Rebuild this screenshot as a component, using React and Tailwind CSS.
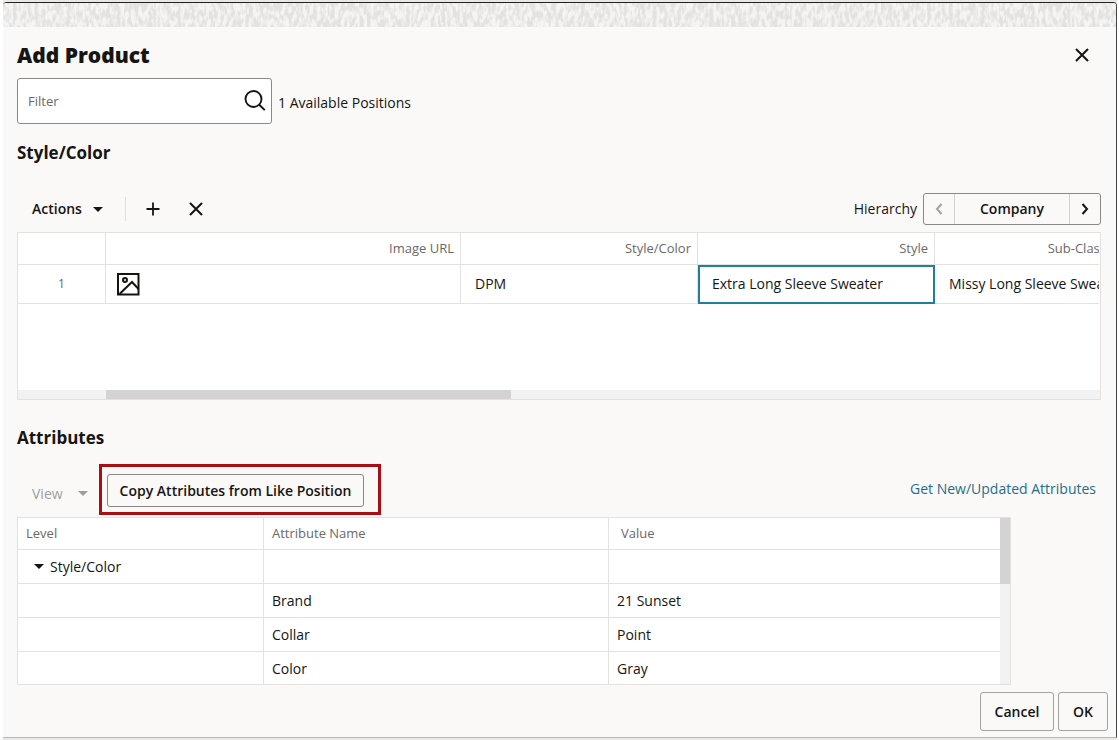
import { useState } from "react";

const products = [
  {
    id: 1,
    styleColor: "DPM",
    style: "Extra Long Sleeve Sweater",
    subClass: "Missy Long Sleeve Sweater",
  },
];

const attributes = [
  { name: "Brand", value: "21 Sunset" },
  { name: "Collar", value: "Point" },
  { name: "Color", value: "Gray" },
];

const CloseIcon = () => (
  <svg width="14" height="14" viewBox="0 0 14 14" fill="none" stroke="#161513" strokeWidth="2">
    <path d="M1 1l12 12M13 1L1 13" />
  </svg>
);

const PlusIcon = () => (
  <svg width="14" height="14" viewBox="0 0 14 14" fill="none" stroke="#161513" strokeWidth="1.8">
    <path d="M7 0.5v13M0.5 7h13" />
  </svg>
);

const SearchIcon = () => (
  <svg width="22" height="22" viewBox="0 0 22 22" fill="none" stroke="#161513" strokeWidth="1.9">
    <circle cx="9.5" cy="9" r="8" />
    <path d="M15.2 14.7l5.6 5.4" />
  </svg>
);

const CaretIcon = ({ className }) => (
  <svg width="10" height="5" viewBox="0 0 10 5" className={className} fill="currentColor">
    <path d="M0 0h10L5 5z" />
  </svg>
);

const ImageIcon = () => (
  <svg width="24" height="24" viewBox="0 0 24 24" fill="none" stroke="#161513" strokeWidth="2">
    <path d="M2 2h20.5v20.5H2z" />
    <circle cx="9" cy="8" r="2" />
    <path d="M3.5 22L16 10l6.5 7" />
  </svg>
);

const ChevronIcon = ({ d }) => (
  <svg width="8" height="12" viewBox="0 0 8 12" fill="none" stroke="currentColor" strokeWidth="2">
    <path d={d} />
  </svg>
);

// Woven strip along the top edge of the dialog
const TextureStrip = () => (
  <svg className="block h-6 w-full" aria-hidden="true">
    <filter id="weave" x="0" y="0" width="100%" height="100%" colorInterpolationFilters="sRGB">
      <feTurbulence type="fractalNoise" baseFrequency="0.28 0.12" numOctaves="2" seed="4" />
      <feColorMatrix values="0 0 0 0 0.89  0 0 0 0 0.885  0 0 0 0 0.88  4 0 0 0 -1.5" />
    </filter>
    <rect width="100%" height="100%" fill="#f5f4f2" />
    <rect width="100%" height="100%" filter="url(#weave)" />
  </svg>
);

const App = () => {
  const [filter, setFilter] = useState("");

  return (
    <div className="min-h-screen border-r-2 border-l-[3px] border-white bg-[#e9e8e7] py-[2px] font-['Open_Sans','Noto_Sans',sans-serif] text-sm text-[#161513]">
      <div
        role="dialog"
        aria-labelledby="dialog-title"
        className="flex min-h-[736px] flex-col overflow-hidden rounded-t border-t border-r border-b border-t-[#222] border-r-[#444] border-b-[#b9b8b6] bg-[#faf9f8]"
      >
        <TextureStrip />

        <div className="flex flex-1 flex-col pr-[15px] pl-[14px]">
          <div className="mt-3 flex h-8 items-center justify-between">
            <h1 id="dialog-title" className="text-[21px] font-extrabold">
              Add Product
            </h1>
            <button type="button" aria-label="Close" className="mr-3">
              <CloseIcon />
            </button>
          </div>

          <div className="mt-[7px] flex items-center gap-[6px]">
            <div className="flex h-[46px] w-[255px] items-center rounded-[3px] border border-[#8a8987] bg-white pr-[5px] pl-[10px]">
              <input
                type="text"
                aria-label="Filter"
                placeholder="Filter"
                value={filter}
                onChange={(e) => setFilter(e.target.value)}
                className="min-w-0 flex-1 text-[13px] outline-none placeholder:text-[#6b6967]"
              />
              <button type="button" aria-label="Search">
                <SearchIcon />
              </button>
            </div>
            <span className="pt-1">1 Available Positions</span>
          </div>

          <h2 className="mt-[17px] text-[17px] leading-6 font-bold">Style/Color</h2>

          <div className="mt-6 flex h-10 items-center">
            <button type="button" className="ml-[15px] flex items-center gap-[11px] font-semibold">
              Actions
              <CaretIcon />
            </button>
            <div className="ml-[22px] h-6 w-px bg-[#e0dfdd]" />
            <button type="button" aria-label="Add" className="ml-5">
              <PlusIcon />
            </button>
            <button type="button" aria-label="Remove" className="ml-[29px]">
              <CloseIcon />
            </button>

            <span className="ml-auto">Hierarchy</span>
            <div className="ml-[6px] flex h-8 items-stretch rounded-[3px] border border-[#8a8987]">
              <button type="button" aria-label="Previous level" className="flex w-[30px] items-center justify-center text-[#a5a3a1]">
                <ChevronIcon d="M6.5 1L2 6l4.5 5" />
              </button>
              <button type="button" className="w-[116px] border-x border-[#d4d2d0] font-semibold">
                Company
              </button>
              <button type="button" aria-label="Next level" className="flex w-[30px] items-center justify-center">
                <ChevronIcon d="M1.5 1L6 6l-4.5 5" />
              </button>
            </div>
          </div>

          <div className="mt-[3px] border border-[#e4e2e0] bg-white">
            <div className="h-[157px] overflow-hidden pr-px">
              <div className="overflow-hidden">
                <table className="w-[1094px] table-fixed border-separate border-spacing-0 text-left whitespace-nowrap">
                  <colgroup>
                    <col className="w-[88px]" />
                    <col className="w-[355px]" />
                    <col className="w-[237px]" />
                    <col className="w-[237px]" />
                    <col />
                  </colgroup>
                  <thead>
                    <tr className="h-8 text-right text-[13px] text-[#6b6967]">
                      <th className="border-r border-b border-[#e4e2e0]" />
                      <th className="border-r border-b border-[#e4e2e0] px-[6px] font-normal">Image URL</th>
                      <th className="border-r border-b border-[#e4e2e0] px-[6px] font-normal">Style/Color</th>
                      <th className="border-r border-b border-[#e4e2e0] px-[6px] font-normal">Style</th>
                      <th className="border-b border-[#e4e2e0] px-[6px] font-normal">Sub-Class</th>
                    </tr>
                  </thead>
                  <tbody>
                    {products.map((product) => (
                      <tr key={product.id} className="h-[39px]">
                        <td className="border-r border-b border-[#e4e2e0] text-center text-xs text-[#6b6967]">
                          {product.id}
                        </td>
                        <td className="border-r border-b border-[#e4e2e0] pl-[10px]">
                          <ImageIcon />
                        </td>
                        <td className="border-r border-b border-[#e4e2e0] pl-[14px]">{product.styleColor}</td>
                        <td className="border-r border-b border-[#e4e2e0] pl-[14px] outline-2 -outline-offset-2 outline-[#227e9e]">
                          {product.style}
                        </td>
                        <td className="border-b border-[#e4e2e0] pl-[14px]">{product.subClass}</td>
                      </tr>
                    ))}
                  </tbody>
                </table>
              </div>
            </div>
            <div className="h-[9px] bg-[#f2f2f2] pl-[88px]">
              <div className="h-full w-[405px] bg-[#d4d2d2]" />
            </div>
          </div>

          <h2 className="mt-[26px] text-[17px] leading-6 font-bold">Attributes</h2>

          <div className="mt-[14px] flex items-center">
            <button type="button" disabled className="ml-[15px] flex items-center gap-[15px] pt-2 text-[#a09e9c]">
              View
              <CaretIcon />
            </button>
            <div className="ml-[11px] border-[3px] border-[#a80f14] pt-[7px] pr-[14px] pb-[5px] pl-[5px]">
              <button type="button" className="h-[33px] rounded-[3px] border border-[#8a8987] px-3 font-semibold">
                Copy Attributes from Like Position
              </button>
            </div>
            <a href="#attributes" className="mr-[5px] ml-auto pb-[2px] text-[#1f6f88]">
              Get New/Updated Attributes
            </a>
          </div>

          <div id="attributes" className="mt-[2px] flex w-11/12 border border-[#e4e2e0] bg-white">
            <div className="h-[166px] min-w-0 flex-1 overflow-hidden">
              <table className="w-full table-fixed border-separate border-spacing-0 text-left">
                <colgroup>
                  <col className="w-[246px]" />
                  <col className="w-[345px]" />
                  <col />
                </colgroup>
                <thead>
                  <tr className="h-8 text-[13px] text-[#6b6967]">
                    <th className="border-r border-b border-[#e4e2e0] pl-2 font-normal">Level</th>
                    <th className="border-r border-b border-[#e4e2e0] pl-2 font-normal">Attribute Name</th>
                    <th className="border-b border-[#e4e2e0] pl-3 font-normal">Value</th>
                  </tr>
                </thead>
                <tbody>
                  <tr className="h-[34px]">
                    <td className="border-r border-b border-[#e4e2e0]">
                      <button type="button" aria-expanded="true" className="ml-4 flex items-center gap-[6px]">
                        <CaretIcon />
                        Style/Color
                      </button>
                    </td>
                    <td className="border-r border-b border-[#e4e2e0]" />
                    <td className="border-b border-[#e4e2e0]" />
                  </tr>
                  {attributes.map((attribute) => (
                    <tr key={attribute.name} className="h-[34px]">
                      <td className="border-r border-b border-[#e4e2e0]" />
                      <td className="border-r border-b border-[#e4e2e0] pl-2">{attribute.name}</td>
                      <td className="border-b border-[#e4e2e0] pl-2">{attribute.value}</td>
                    </tr>
                  ))}
                </tbody>
              </table>
            </div>
            <div className="w-[10px] bg-[#f2f2f2]">
              <div className="h-[66px] bg-[#d4d2d2]" />
            </div>
          </div>

          <div className="mt-[7px] -mr-[7px] flex justify-end gap-1 font-semibold">
            <button type="button" className="h-[39px] w-[74px] rounded-[3px] border border-[#a5a3a1]">
              Cancel
            </button>
            <button type="button" className="h-[39px] w-[50px] rounded-[3px] border border-[#a5a3a1]">
              OK
            </button>
          </div>
        </div>
      </div>
    </div>
  );
};

export default App;
